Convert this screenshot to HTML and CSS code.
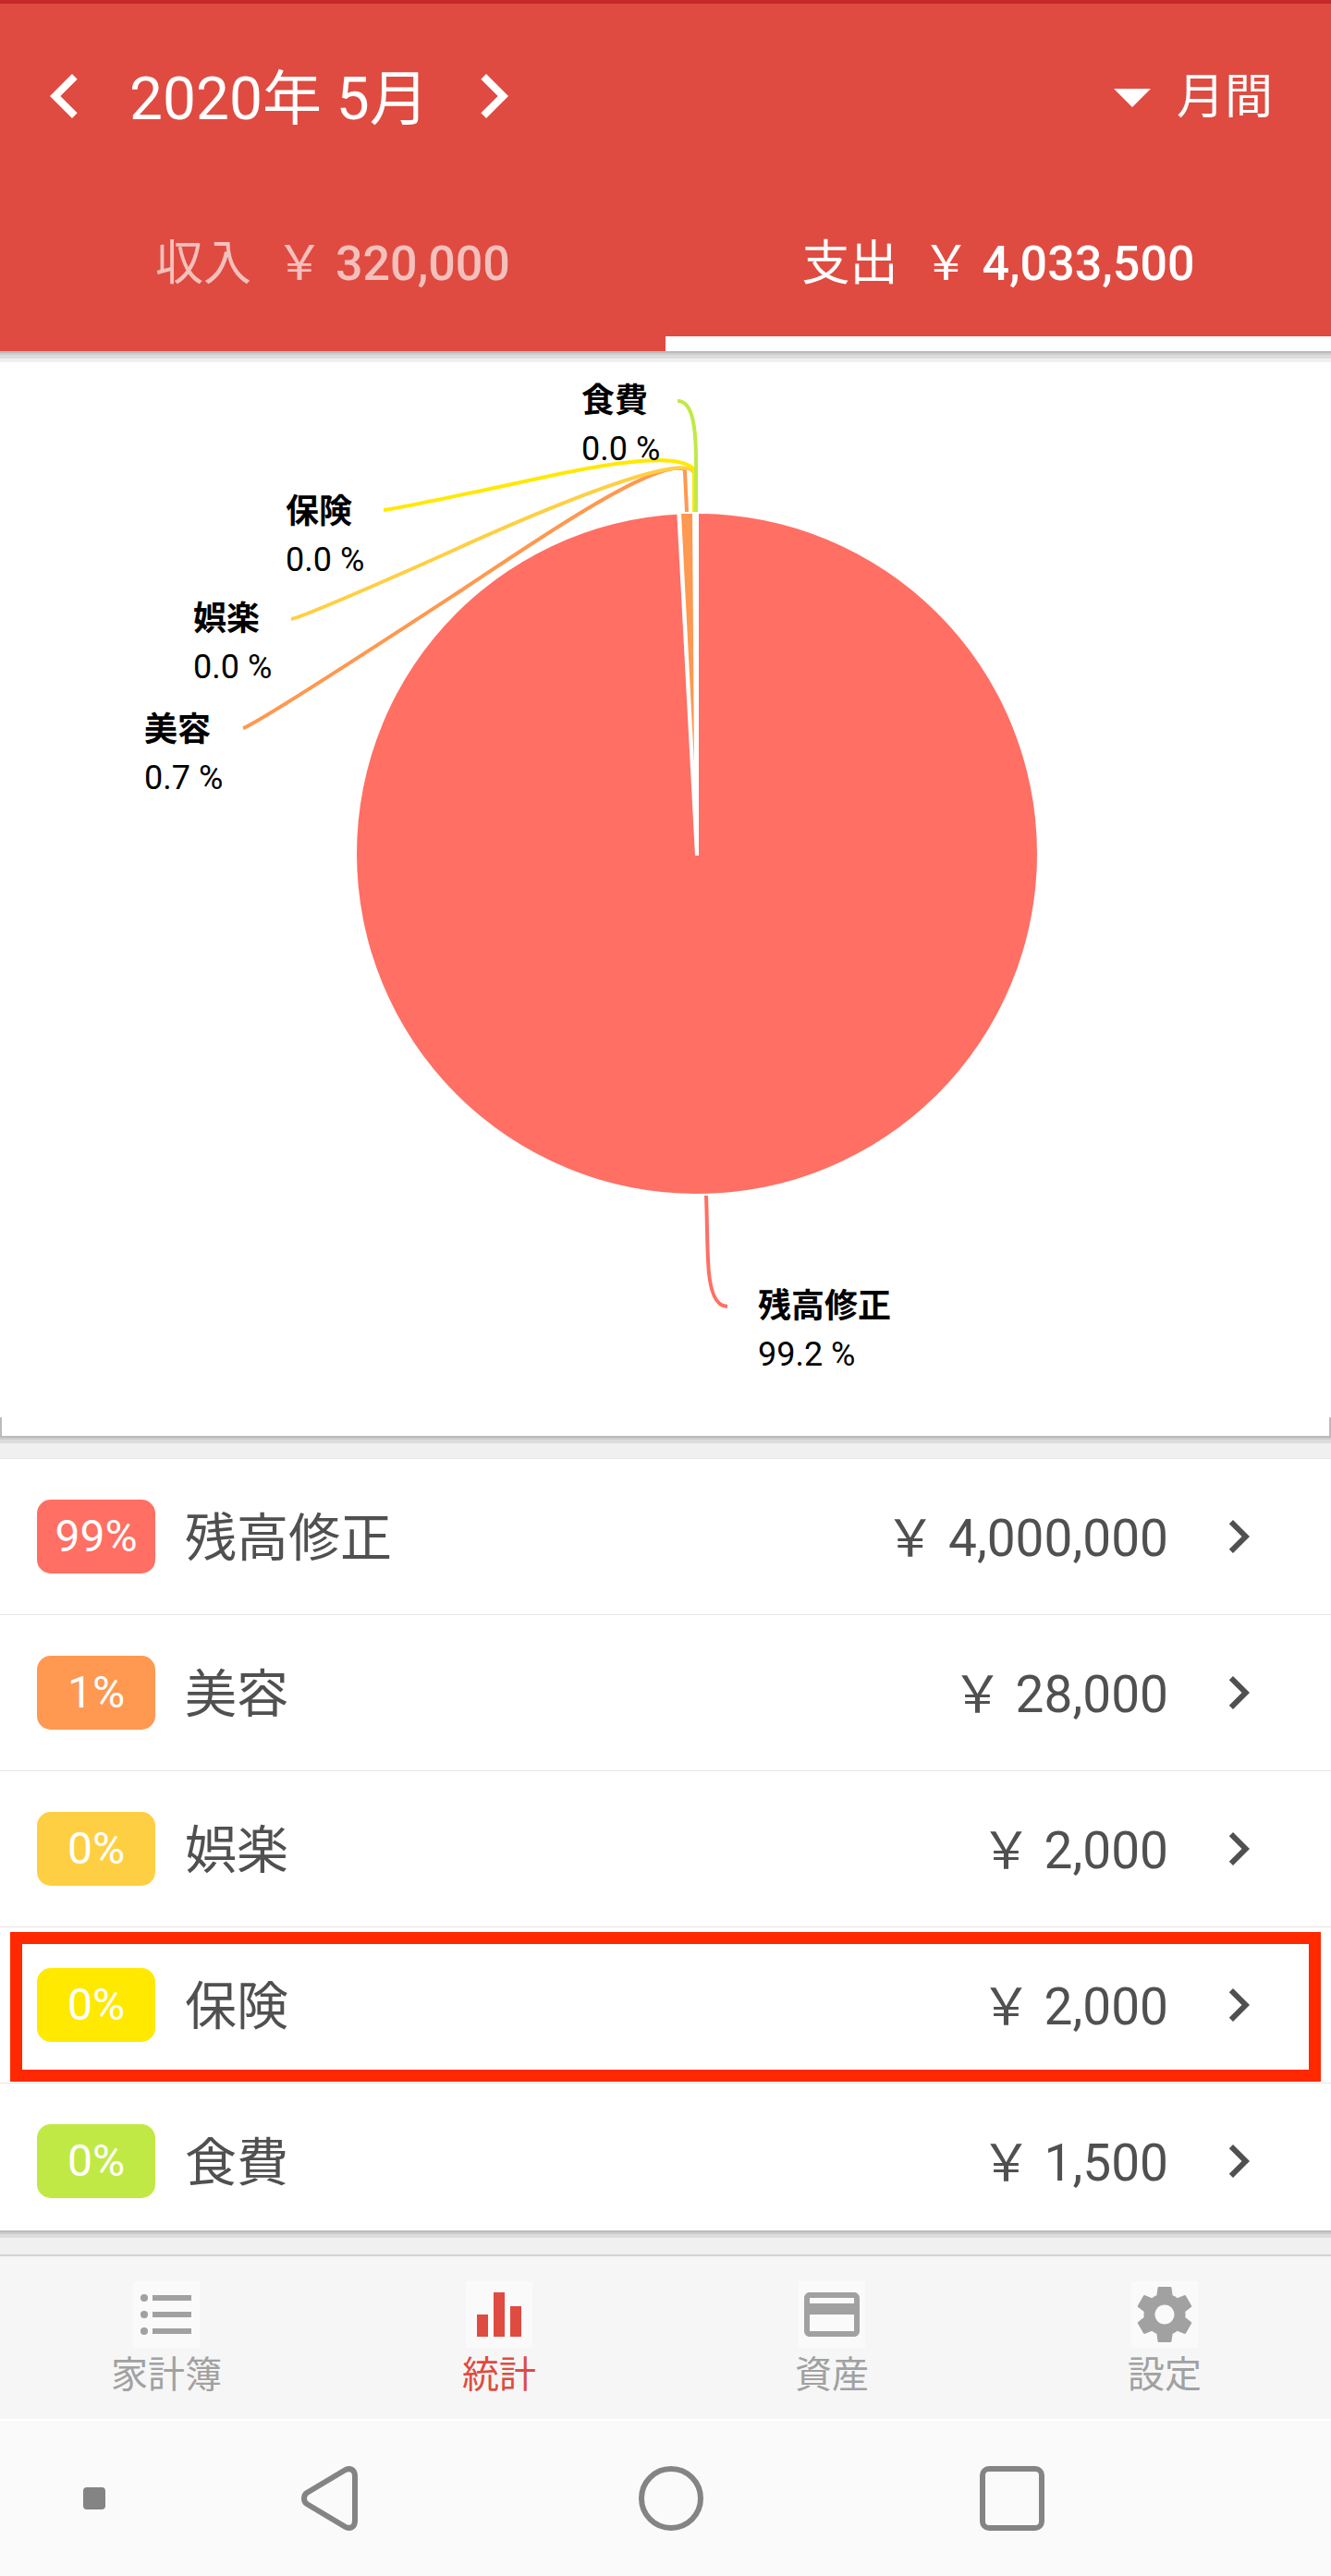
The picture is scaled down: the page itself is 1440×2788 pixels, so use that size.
FILE: index.html
```html
<!DOCTYPE html>
<html lang="ja">
<head>
    <meta charset="UTF-8">
    <meta name="viewport" content="width=device-width, initial-scale=1.0">
    <title>統計</title>
    <link rel="stylesheet" href="styles.css">
</head>
<body>
    <header class="header">
        <div class="header-bar">
            <button class="btn-arrow" aria-label="前の月">
                <svg class="icon-large" viewBox="0 0 24 24"><path d="M15.41 7.41L14 6l-6 6 6 6 1.41-1.41L10.83 12z"/></svg>
            </button>
            <h1 class="month">2020年 5月</h1>
            <button class="btn-arrow" aria-label="次の月">
                <svg class="icon-large" viewBox="0 0 24 24"><path d="M10 6L8.59 7.41 13.17 12l-4.58 4.59L10 18l6-6z"/></svg>
            </button>
            <label class="period">
                <svg class="icon-large" viewBox="0 0 24 24"><path d="M7 10l5 5 5-5z"/></svg>
                <select class="period-select" aria-label="期間">
                    <option>月間</option>
                </select>
            </label>
        </div>
        <div class="tabs" role="tablist">
            <button class="tab" role="tab"><span>収入</span><span class="money">￥ <b>320,000</b></span></button>
            <button class="tab active" role="tab" aria-selected="true"><span>支出</span><span class="money">￥ <b>4,033,500</b></span></button>
        </div>
    </header>

    <main>
        <section class="chart">
            <svg class="pie" viewBox="0 0 1440 1174">
                <circle cx="754" cy="544" r="368" fill="#ff6f63"/>
                <path d="M732 170H756V546H752Z" fill="#fff"/>
                <path d="M737 176L749 176L751 447Z" fill="#ff9850"/>

                <g class="lines">
                    <path stroke="#ff6f63" d="M764 914C765 940 765 965 766 983C767 1015 773 1034 787 1034"/>
                    <path stroke="#ff9850" d="M263 408C278 404 450 291 502 257S700 120 738 127Q741 127 741 131L743 174"/>
                    <path stroke="#ffcf43" d="M315 290C328 288 450 234 494 214S740 103 751 132V174"/>
                    <path stroke="#ffe900" d="M415 172C430 171 530 149 600 134S735 110 751 128V174"/>
                    <path stroke="#c1e946" d="M733 54C749 54 753 80 753 120V174"/>
                </g>

                <g class="labels">
                    <text x="629" y="66" class="name">食費</text>
                    <text x="629" y="118">0.0 %</text>
                    <text x="309" y="186" class="name">保険</text>
                    <text x="309" y="238">0.0 %</text>
                    <text x="209" y="302" class="name">娯楽</text>
                    <text x="209" y="354">0.0 %</text>
                    <text x="156" y="422" class="name">美容</text>
                    <text x="156" y="474">0.7 %</text>
                    <text x="820" y="1046" class="name">残高修正</text>
                    <text x="820" y="1098">99.2 %</text>
                </g>
            </svg>
        </section>

        <section class="list">
            <a class="row" href="#">
                <span class="badge red">99%</span>
                <span class="category">残高修正</span>
                <span class="amount">￥ 4,000,000</span>
                <svg class="icon" viewBox="0 0 24 24"><path d="M10 6L8.59 7.41 13.17 12l-4.58 4.59L10 18l6-6z"/></svg>
            </a>
            <a class="row" href="#">
                <span class="badge orange">1%</span>
                <span class="category">美容</span>
                <span class="amount">￥ 28,000</span>
                <svg class="icon" viewBox="0 0 24 24"><path d="M10 6L8.59 7.41 13.17 12l-4.58 4.59L10 18l6-6z"/></svg>
            </a>
            <a class="row" href="#">
                <span class="badge amber">0%</span>
                <span class="category">娯楽</span>
                <span class="amount">￥ 2,000</span>
                <svg class="icon" viewBox="0 0 24 24"><path d="M10 6L8.59 7.41 13.17 12l-4.58 4.59L10 18l6-6z"/></svg>
            </a>
            <a class="row highlight" href="#">
                <span class="badge yellow">0%</span>
                <span class="category">保険</span>
                <span class="amount">￥ 2,000</span>
                <svg class="icon" viewBox="0 0 24 24"><path d="M10 6L8.59 7.41 13.17 12l-4.58 4.59L10 18l6-6z"/></svg>
            </a>
            <a class="row" href="#">
                <span class="badge green">0%</span>
                <span class="category">食費</span>
                <span class="amount">￥ 1,500</span>
                <svg class="icon" viewBox="0 0 24 24"><path d="M10 6L8.59 7.41 13.17 12l-4.58 4.59L10 18l6-6z"/></svg>
            </a>
        </section>
        <div class="list-end"></div>
    </main>

    <nav class="menu">
        <a class="menu-item" href="#">
            <svg class="icon" viewBox="0 0 24 24"><circle cx="4" cy="6" r="1.35"/><circle cx="4" cy="12" r="1.35"/><circle cx="4" cy="18" r="1.35"/><path d="M7 5h14v2H7zM7 11h14v2H7zM7 17h14v2H7z"/></svg>
            家計簿
        </a>
        <a class="menu-item active" href="#">
            <svg class="icon" viewBox="0 0 24 24"><path d="M4 12h4v8H4zM10 4h4v16h-4zM16 9h4v11h-4z"/></svg>
            統計
        </a>
        <a class="menu-item" href="#">
            <svg class="icon" viewBox="0 0 24 24"><path d="M20 4H4c-1.11 0-1.99.89-1.99 2L2 18c0 1.11.89 2 2 2h16c1.11 0 2-.89 2-2V6c0-1.11-.89-2-2-2zm0 14H4v-6h16v6zm0-10H4V6h16v2z"/></svg>
            資産
        </a>
        <a class="menu-item" href="#">
            <svg class="icon" viewBox="0 0 24 24"><path d="M19.43 12.98c.04-.32.07-.64.07-.98s-.03-.66-.07-.98l2.11-1.65c.19-.15.24-.42.12-.64l-2-3.46c-.12-.22-.39-.3-.61-.22l-2.49 1c-.52-.4-1.08-.73-1.69-.98l-.38-2.65C14.46 2.18 14.25 2 14 2h-4c-.25 0-.46.18-.49.42l-.38 2.65c-.61.25-1.17.59-1.69.98l-2.49-1c-.23-.09-.49 0-.61.22l-2 3.46c-.13.22-.07.49.12.64l2.11 1.65c-.04.32-.07.65-.07.98s.03.66.07.98l-2.11 1.65c-.19.15-.24.42-.12.64l2 3.46c.12.22.39.3.61.22l2.49-1c.52.4 1.08.73 1.69.98l.38 2.65c.03.24.24.42.49.42h4c.25 0 .46-.18.49-.42l.38-2.65c.61-.25 1.17-.59 1.69-.98l2.49 1c.23.09.49 0 .61-.22l2-3.46c.12-.22.07-.49-.12-.64l-2.11-1.65zM12 15.5c-1.93 0-3.5-1.57-3.5-3.5s1.57-3.5 3.5-3.5 3.5 1.57 3.5 3.5-1.57 3.5-3.5 3.5z"/></svg>
            設定
        </a>
    </nav>

    <div class="system-bar">
        <button class="key" aria-label="非表示">
            <svg class="key-icon" viewBox="0 0 72 72"><rect class="dot" x="24" y="24" width="24" height="24" rx="4"/></svg>
        </button>
        <button class="key" aria-label="戻る">
            <svg class="key-icon" viewBox="0 0 72 72"><path d="M52 5.500Q56 3 60 5Q63 7 63 12V60Q63 65 60 67Q56 69 52 66.500L11 42Q8 40 8 36Q8 32 11 30Z"/></svg>
        </button>
        <button class="key" aria-label="ホーム">
            <svg class="key-icon" viewBox="0 0 72 72"><circle cx="36" cy="36" r="32"/></svg>
        </button>
        <button class="key" aria-label="履歴">
            <svg class="key-icon" viewBox="0 0 72 72"><rect x="4" y="4" width="64" height="64" rx="7"/></svg>
        </button>
    </div>
</body>
</html>
```
FILE: styles.css
```css
* { box-sizing: border-box; }
body {
    margin: 0;
    font-family: Roboto, "Noto Sans CJK JP", sans-serif;
    background-color: #fafafa;
    color: #505050;
}
a { color: inherit; text-decoration: none; }
button {
    padding: 0;
    border: none;
    background: none;
    color: inherit;
    font: inherit;
    cursor: pointer;
}
svg { display: block; fill: currentColor; }
.icon { width: 72px; height: 72px; }
.icon-large { width: 96px; height: 96px; }

/* header */
.header {
    position: relative;
    border-top: 4px solid #c62828;
    background-color: #df4b41;
    color: white;
}
.header-bar {
    display: flex;
    align-items: center;
    height: 200px;
    padding: 0 62px 0 22px;
}
.month {
    margin: 0 22px;
    padding-top: 8px;
    font-size: 64px;
    font-weight: 400;
    line-height: 80px;
}
.period { display: flex; align-items: center; margin-left: auto; }
.period-select {
    appearance: none;
    padding: 4px 0 0;
    border: none;
    background: none;
    color: white;
    font-family: inherit;
    font-size: 52px;
    line-height: 72px;
}
.tabs { display: flex; }
.tab {
    flex: 1;
    display: flex;
    justify-content: center;
    align-items: center;
    gap: 26px;
    height: 176px;
    padding-top: 4px;
    border-bottom: 16px solid transparent;
    font-size: 52px;
    line-height: 72px;
    color: rgba(255, 255, 255, 0.65);
}
.tab.active { color: white; border-bottom-color: white; }
.money b { font-weight: 500; }

/* stepped shadow under the header, the chart and the list */
.header::after, .list-end::before, .list::before {
    content: "";
    display: block;
    height: 8px;
    background: linear-gradient(#bbb 2px, #ccc 2px, #ccc 4px, #dcdcdc 4px);
}
.header::after {
    position: absolute;
    left: 0;
    right: 0;
    top: 100%;
    height: 12px;
    background: linear-gradient(#bbb 2px, #ccc 2px, #ccc 4px, #dcdcdc 4px, #dcdcdc 8px, #f0f0f0 8px);
}

/* chart */
.chart {
    background:
        linear-gradient(#bbb, #bbb) left bottom / 2px 20px no-repeat,
        linear-gradient(#bbb, #bbb) right bottom / 2px 20px no-repeat,
        white;
}
.pie { width: 100%; height: auto; }
.lines { fill: none; stroke-width: 4; }
.labels { fill: black; font-size: 36px; }
.name { font-weight: 700; }

/* category list */
.list { background-color: white; }
.list::before { border-bottom: 16px solid #f0f0f0; }
.row {
    position: relative;
    display: flex;
    align-items: center;
    height: 169px;
    padding: 0 64px 0 40px;
    border-top: 1px solid #e6e6e6;
    font-size: 56px;
    line-height: 80px;
}
.badge {
    width: 128px;
    border-radius: 15px;
    color: white;
    font-size: 48px;
    text-align: center;
}
.category { flex: 1; margin-left: 32px; padding-top: 4px; }
.amount { margin-right: 40px; padding-top: 4px; font-size: 55px; }
.red { background-color: #ff6f63; }
.orange { background-color: #ff9850; }
.amber { background-color: #ffcf43; }
.yellow { background-color: #ffe900; }
.green { background-color: #c1e946; }
.highlight::after {
    content: "";
    position: absolute;
    inset: 5px 11px 1px;
    border: 13px solid #ff2800;
}
/* covers the bottom edge of the last row */
.list-end {
    position: relative;
    height: 26px;
    margin-top: -9px;
    background-color: #f0f0f0;
}

/* bottom menu */
.menu {
    display: flex;
    border-top: 2px solid #d3d3d3;
    border-bottom: 2px solid white;
    background-color: #f6f6f6;
}
.menu-item {
    flex: 1;
    display: flex;
    flex-direction: column;
    align-items: center;
    gap: 2px;
    height: 176px;
    padding-top: 27px;
    font-size: 40px;
    line-height: 56px;
    color: #a1a1a1;
}
.menu-item.active { color: #df4b41; }
.menu-item .icon { background-color: #fafafa; }

/* system keys */
.system-bar {
    display: grid;
    grid-template-columns: 140px repeat(3, 1fr);
    align-items: center;
    height: 168px;
    padding: 0 160px 0 32px;
    color: #848484;
}
.key { display: flex; justify-content: center; }
.key-icon { width: 72px; height: 72px; fill: none; stroke: currentColor; stroke-width: 6; }
.dot { fill: currentColor; stroke: none; }
```
